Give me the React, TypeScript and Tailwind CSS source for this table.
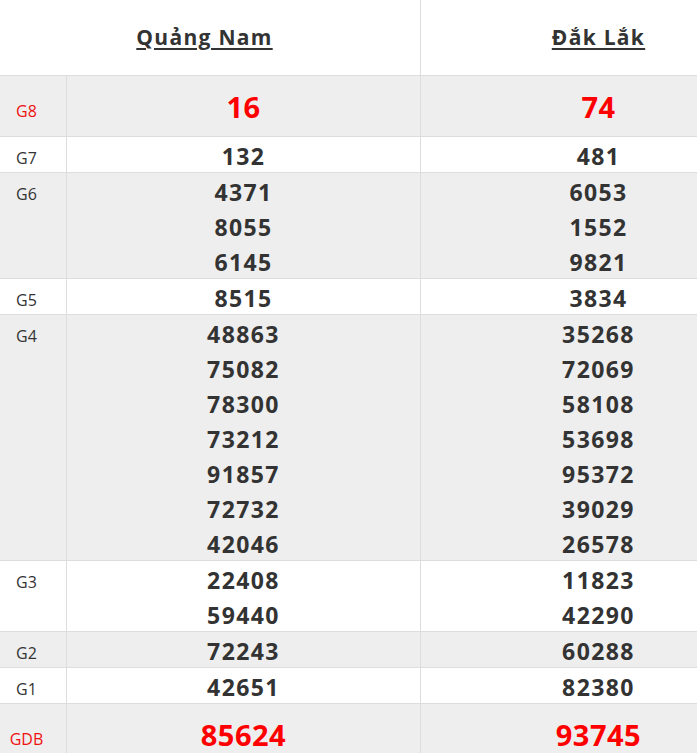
const rows: { label: string; a: string[]; b: string[]; big?: boolean; gray: boolean }[] = [
  { label: "G8", a: ["16"], b: ["74"], big: true, gray: true },
  { label: "G7", a: ["132"], b: ["481"], gray: false },
  { label: "G6", a: ["4371", "8055", "6145"], b: ["6053", "1552", "9821"], gray: true },
  { label: "G5", a: ["8515"], b: ["3834"], gray: false },
  {
    label: "G4",
    a: ["48863", "75082", "78300", "73212", "91857", "72732", "42046"],
    b: ["35268", "72069", "58108", "53698", "95372", "39029", "26578"],
    gray: true,
  },
  { label: "G3", a: ["22408", "59440"], b: ["11823", "42290"], gray: false },
  { label: "G2", a: ["72243"], b: ["60288"], gray: true },
  { label: "G1", a: ["42651"], b: ["82380"], gray: false },
  { label: "GDB", a: ["85624"], b: ["93745"], big: true, gray: true },
];

const Numbers = ({ values, big, last }: { values: string[]; big?: boolean; last?: boolean }) => (
  <div className={`text-center ${last ? "" : "border-r border-[#ddd]"}`}>
    {values.map((v) =>
      big ? (
        <div key={v} className="h-[60px] text-[29px] leading-[61px] font-bold tracking-[0.5px] text-[#ff0000]">
          {v}
        </div>
      ) : (
        <div key={v} className="h-[35px] text-[23px] leading-[39px] font-bold tracking-[1.4px] text-[#333]">
          {v}
        </div>
      )
    )}
  </div>
);

export default function App() {
  return (
    <div className="w-[697px] h-[753px] overflow-hidden bg-white font-['Open_Sans',sans-serif]">
      <div className="w-[776px]">
        <div className="grid grid-cols-[421px_355px] h-[75px]">
          <div className="border-r border-[#ddd] text-center pr-[11px] text-[21px] leading-[75px] font-bold tracking-[1.3px] text-[#333]">
            <span className="underline decoration-2 underline-offset-[3px]">Quảng Nam</span>
          </div>
          <div className="text-center text-[21px] leading-[75px] font-bold tracking-[1.3px] text-[#333]">
            <span className="underline decoration-2 underline-offset-[3px]">Đắk Lắk</span>
          </div>
        </div>
        {rows.map((r) => (
          <div
            key={r.label}
            className={`grid grid-cols-[67px_354px_355px] border-t border-[#ddd] ${r.gray ? "bg-[#eeeeee]" : "bg-white"}`}
          >
            <div className="border-r border-[#ddd] pr-[13px] text-center text-[16px]">
              {r.big ? (
                <div className="h-[60px] leading-[71px] text-[#ee1111]">{r.label}</div>
              ) : (
                <div className="h-[35px] leading-[43px] text-[#333]">{r.label}</div>
              )}
            </div>
            <Numbers values={r.a} big={r.big} />
            <Numbers values={r.b} big={r.big} last />
          </div>
        ))}
      </div>
    </div>
  );
}
